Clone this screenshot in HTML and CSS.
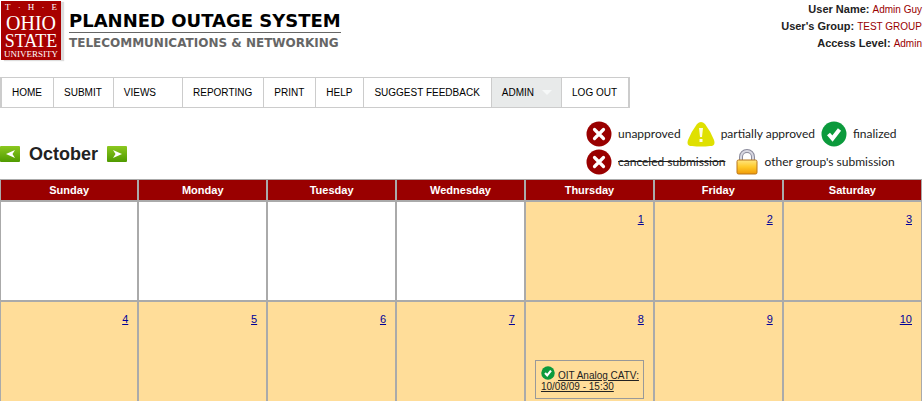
FILE: index.html
```html
<!DOCTYPE html>
<html lang="en">
<head>
<meta charset="utf-8">
<title>Planned Outage System</title>
<link rel="stylesheet" href="styles.css">
</head>
<body>
<svg class="defs" aria-hidden="true">
  <symbol id="cross" viewBox="0 0 26 26"><circle cx="13" cy="13" r="12.5" fill="#990000"/><path d="M8.500 8.500 17.500 17.500M17.500 8.500 8.500 17.500" stroke="#fff" stroke-width="3.2" stroke-linecap="round"/></symbol>
  <symbol id="check" viewBox="0 0 26 26"><circle cx="13" cy="13" r="12.5" fill="#0b9a3c"/><path d="M7.500 13 11.500 17.500 18.500 8.500" fill="none" stroke="#fff" stroke-width="4"/></symbol>
  <symbol id="warn" viewBox="0 0 28 26"><path d="M10 3Q14-1 18 3Q24 11 27 19Q29 25 23 25Q14 26 5 25Q-1 25 1 19Q4 11 10 3Z" fill="#dfe000"/><path d="M12 7h4l-1 9h-2zM12.500 18h3v3h-3z" fill="#fffce0"/></symbol>
  <symbol id="lock" viewBox="0 0 22 26">
    <path d="M5 13V8a6 6 0 0 1 12 0v5" fill="none" stroke="#8b8b9c" stroke-width="4"/><path d="M5 13V8a6 6 0 0 1 12 0v5" fill="none" stroke="#d8d8e2" stroke-width="2"/>
    <rect x="1" y="11" width="20" height="14" rx="1.500" fill="url(#gold)" stroke="#b9761c"/>
  </symbol>
  <linearGradient id="gold" x2="0" y2="1"><stop stop-color="#ffe680"/><stop offset=".5" stop-color="#ffc928"/><stop offset="1" stop-color="#f09a08"/></linearGradient>
  <linearGradient id="green" x2="0" y2="1"><stop stop-color="#8cc820"/><stop offset="1" stop-color="#4f9a00"/></linearGradient>
</svg>

<header class="top">
  <div class="brand">
    <div class="logo"><div class="the"><span>T</span><span>·</span><span>H</span><span>·</span><span>E</span></div><span class="ohio">OHIO</span><span class="state">STATE</span><span class="univ">UNIVERSITY</span></div>
    <div class="titles">
      <h1>PLANNED OUTAGE SYSTEM</h1>
      <p>TELECOMMUNICATIONS &amp; NETWORKING</p>
    </div>
  </div>
  <div class="user">
    <div><b>User Name:</b> <span>Admin Guy</span></div>
    <div><b>User's Group:</b> <span>TEST GROUP</span></div>
    <div><b>Access Level:</b> <span>Admin</span></div>
  </div>
</header>

<nav class="menu">
  <a href="#">HOME</a>
  <a href="#">SUBMIT</a>
  <a href="#" class="drop">VIEWS</a>
  <a href="#">REPORTING</a>
  <a href="#">PRINT</a>
  <a href="#">HELP</a>
  <a href="#">SUGGEST FEEDBACK</a>
  <a href="#" class="current">ADMIN<svg class="caret" viewBox="0 0 10 5" aria-hidden="true"><path d="M0 0H10L5 5Z" fill="#f6f8f8"/></svg></a>
  <a href="#">LOG OUT</a>
</nav>

<section class="bar">
  <div class="month">
    <button type="button" aria-label="Previous month"><svg viewBox="0 0 20 16"><rect width="20" height="16" rx="1" fill="url(#green)"/><path d="M6 8 15 4 12.500 8 15 12Z" fill="#fff"/></svg></button>
    <h2>October</h2>
    <button type="button" aria-label="Next month"><svg viewBox="0 0 20 16"><rect width="20" height="16" rx="1" fill="url(#green)"/><path d="M15 8 6 4 8.500 8 6 12Z" fill="#fff"/></svg></button>
  </div>
  <div class="legend">
    <div class="line">
      <svg class="round"><use href="#cross"/></svg><span>unapproved</span>
      <svg class="wide"><use href="#warn"/></svg><span>partially approved</span>
      <svg class="round"><use href="#check"/></svg><span>finalized</span>
    </div>
    <div class="line">
      <svg class="round"><use href="#cross"/></svg><s>canceled submission</s>
      <svg class="lock"><use href="#lock"/></svg><span>other group's submission</span>
    </div>
  </div>
</section>

<table class="calendar">
  <thead>
    <tr><th class="first">Sunday</th><th>Monday</th><th>Tuesday</th><th>Wednesday</th><th>Thursday</th><th>Friday</th><th class="last">Saturday</th></tr>
  </thead>
  <tbody>
    <tr><td></td><td></td><td></td><td></td><td class="day"><a href="#">1</a></td><td class="day"><a href="#">2</a></td><td class="day"><a href="#">3</a></td></tr>
    <tr>
      <td class="day"><a href="#">4</a></td><td class="day"><a href="#">5</a></td><td class="day"><a href="#">6</a></td><td class="day"><a href="#">7</a></td>
      <td class="day"><a href="#">8</a>
        <div class="event"><svg viewBox="0 0 26 26" aria-hidden="true"><use href="#check"/></svg><a href="#">OIT Analog CATV:<br>10/08/09 - 15:30</a></div>
      </td>
      <td class="day"><a href="#">9</a></td><td class="day"><a href="#">10</a></td>
    </tr>
  </tbody>
</table>
</body>
</html>
```
FILE: styles.css
```css
* { box-sizing: border-box; }
body { margin: 0; background: #fff; color: #222; font: 11px/16px "Liberation Sans", Arial, sans-serif; }
h1, h2, p { margin: 0; }
.defs { position: absolute; width: 0; height: 0; }

.top { display: flex; justify-content: space-between; padding: 1px 2px 0 1px; }
.brand { display: flex; }
.logo { display: flex; flex-direction: column; align-items: center; width: 60px; height: 59px; padding-top: 1px; background: #a80000; color: #fff; box-shadow: 3px 1px 1px #ddd; font-family: "Liberation Serif", serif; }
.the { display: flex; justify-content: space-between; width: 52px; font-size: 9px; line-height: 11px; }
.ohio { font-size: 20px; line-height: 20px; }
.state { font-size: 18px; line-height: 16px; }
.univ { font-size: 9px; line-height: 11px; }
.titles { margin-left: 8px; padding-top: 9px; font-family: "DejaVu Sans", Verdana, sans-serif; white-space: nowrap; }
.titles h1 { border-bottom: 1px solid #666; color: #000; font-size: 18px; line-height: 22px; }
.titles p { padding-top: 1px; color: #666; font-size: 12px; line-height: 18px; font-weight: bold; }
.user { text-align: right; line-height: 17px; }
.user span { color: #900; font-size: 10px; }

.menu { display: flex; width: max-content; margin-top: 17px; border: 1px solid #ccc; border-width: 1px 1px 1px 2px; font-size: 10px; }
.menu a { display: flex; align-items: center; height: 29px; padding: 0 11px 0 10px; border-right: 1px solid #ccc; color: #000; text-decoration: none; }
.menu .drop { padding-right: 26px; }
.menu .current { padding-right: 9px; background: #e8eaea; }
.caret { width: 10px; height: 5px; margin-left: 8px; }

.bar { display: flex; justify-content: space-between; align-items: flex-start; height: 71px; padding: 12px 20px 0 0; }
.month { display: flex; align-items: center; gap: 9px; padding-top: 23px; }
.month h2 { font-size: 18px; line-height: 22px; }
.month button { padding: 0; border: 0; background: none; }
.month svg { display: block; width: 20px; height: 16px; }
.legend { width: 318px; font: 12px/28px Lato, sans-serif; }
.line { display: flex; align-items: center; gap: 6px; height: 28px; white-space: nowrap; }
.line svg { flex: none; }
.round { width: 26px; height: 26px; }
.wide { width: 28px; height: 26px; }
.lock { width: 22px; height: 26px; margin-left: 5px; }

.calendar { width: calc(100% - 2px); border-spacing: 0; table-layout: fixed; }
.calendar th, .calendar td { border: 1px solid #aaa; }
.calendar th { width: 13.98%; height: 22px; padding: 0; background: #900; color: #fff; }
.calendar .first { width: 15%; }
.calendar .last { width: auto; }
.calendar td { height: 100px; padding: 9px 9px 0; text-align: right; vertical-align: top; }
.calendar .day { background: #fd9; }
.day a { color: #009; }
.event { margin: 33px 0 9px; padding: 5px 0 6px 5px; border: 1px solid #999; text-align: left; font-size: 10px; line-height: 11px; white-space: nowrap; }
.day .event a { color: #222; }
.event svg { width: 14px; height: 14px; margin-right: 3px; vertical-align: -1px; }
```
